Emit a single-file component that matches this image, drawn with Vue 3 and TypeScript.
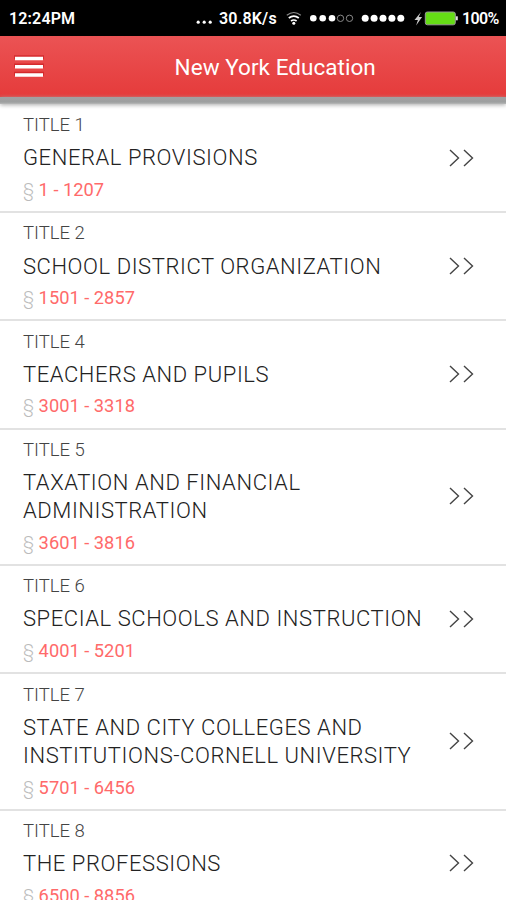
<script setup lang="ts">
interface TitleEntry {
  label: string
  lines: string[]
  range: string
}

const entries: TitleEntry[] = [
  { label: 'TITLE 1', lines: ['GENERAL PROVISIONS'], range: '1 - 1207' },
  { label: 'TITLE 2', lines: ['SCHOOL DISTRICT ORGANIZATION'], range: '1501 - 2857' },
  { label: 'TITLE 4', lines: ['TEACHERS AND PUPILS'], range: '3001 - 3318' },
  { label: 'TITLE 5', lines: ['TAXATION AND FINANCIAL', 'ADMINISTRATION'], range: '3601 - 3816' },
  { label: 'TITLE 6', lines: ['SPECIAL SCHOOLS AND INSTRUCTION'], range: '4001 - 5201' },
  { label: 'TITLE 7', lines: ['STATE AND CITY COLLEGES AND', 'INSTITUTIONS-CORNELL UNIVERSITY'], range: '5701 - 6456' },
  { label: 'TITLE 8', lines: ['THE PROFESSIONS'], range: '6500 - 8856' },
]
</script>

<template>
  <div class="screen">
    <div class="status">
      <span class="clock">12:24PM</span>
      <svg class="more" width="17" height="36" viewBox="0 0 17 36" fill="#fff">
        <circle cx="2.2" cy="22.2" r="1.6" /><circle cx="8.2" cy="22.2" r="1.6" /><circle cx="14.2" cy="22.2" r="1.6" />
      </svg>
      <span class="speed">30.8K/s</span>
      <svg class="signals" width="120" height="36" viewBox="286 0 120 36">
        <g fill="none" stroke="#fff">
          <path d="M286.8 15.3q7-5.6 14 0" stroke-width="1.2" opacity=".55" />
          <path d="M288.8 18q5-3.7 10 0" stroke-width="1.9" />
          <path d="M291 21q2.8-2 5.6 0" stroke-width="1.7" />
        </g>
        <circle cx="293.8" cy="23.3" r="1.5" fill="#fff" />
        <g fill="#fff">
          <circle cx="313.3" cy="18.3" r="3.3" /><circle cx="322.7" cy="18.3" r="3.3" /><circle cx="332" cy="18.3" r="3.3" />
          <circle cx="365.2" cy="18.3" r="3.5" /><circle cx="374.1" cy="18.3" r="3.5" /><circle cx="383" cy="18.3" r="3.5" /><circle cx="391.9" cy="18.3" r="3.5" /><circle cx="400.8" cy="18.3" r="3.5" />
        </g>
        <g fill="none" stroke="#888" stroke-width="1">
          <circle cx="340.5" cy="18.3" r="3.2" /><circle cx="349.5" cy="18.3" r="3.2" />
        </g>
      </svg>
      <svg class="battery" width="46" height="36" viewBox="412 0 46 36">
        <path d="M421 12l-6.5 8h3.4l-1.8 5.5 6-8.5h-3.4z" fill="#ccc" />
        <rect x="425.3" y="12" width="30" height="12.8" rx="2" fill="#65dc16" stroke="#999" stroke-width="1" />
        <rect x="455.8" y="16.3" width="2" height="4" fill="#ddd" />
      </svg>
      <span class="percent">100%</span>
    </div>
    <header class="bar">
      <svg class="menu" width="30" height="26" viewBox="0 0 30 26">
        <path d="M0 3.2h30M0 11.4h30M0 19.7h30" stroke="#c40d12" stroke-width="4" opacity=".5" />
        <path d="M1 4.5h28M1 12.7h28M1 21h28" stroke="#fff" stroke-width="3.4" />
      </svg>
      <h1 class="heading">New York Education</h1>
    </header>
    <div class="shade"></div>
    <ul class="list">
      <li v-for="entry in entries" :key="entry.label" class="row">
        <div class="copy">
          <div class="label">{{ entry.label }}</div>
          <div v-for="line in entry.lines" :key="line" class="name">{{ line }}</div>
          <div class="range"><span class="mark">§</span> {{ entry.range }}</div>
        </div>
        <svg class="more-icon" width="26" height="18" viewBox="0 0 26 18" fill="none" stroke="#444" stroke-width="1.4">
          <path d="M1 1l8.5 8L1 17M15 1l8.5 8L15 17" />
        </svg>
      </li>
    </ul>
  </div>
</template>

<style>
body {
  background: #fff;
}
</style>

<style scoped>
.screen {
  width: 506px;
  height: 900px;
  overflow: hidden;
  background: #fff;
  font-family: Roboto, "Liberation Sans", sans-serif;
}
.status {
  display: flex;
  height: 36px;
  line-height: 38px;
  background: #000;
  color: #fff;
  font-size: 16px;
  font-weight: 600;
  white-space: nowrap;
}
.status svg {
  flex: none;
}
.clock {
  width: 186px;
  padding-left: 9px;
  letter-spacing: 0.15px;
}
.more {
  margin-left: 1px;
}
.speed {
  width: 67px;
  margin-left: 6px;
  letter-spacing: 0.2px;
}
.battery {
  margin-left: 6px;
}
.percent {
  margin-left: 4px;
  letter-spacing: -0.6px;
}
.bar {
  display: flex;
  align-items: center;
  height: 61px;
  background: linear-gradient(#eb5354, #e53b3b);
  color: #fff;
}
.menu {
  flex: none;
  margin-left: 14px;
}
.heading {
  margin: 1px 0 0 130.6px;
  font-size: 22.5px;
  font-weight: 400;
  line-height: 30px;
  letter-spacing: 0.04px;
  white-space: nowrap;
}
.shade {
  height: 7px;
  background: linear-gradient(#a2a0a2 0, #9d9f9f 5px, #b8b8b8 7px);
  box-shadow: 0 1px 4px #aaa;
}
.list {
  margin: 0;
  padding: 0;
  list-style: none;
}
.row {
  display: flex;
  align-items: center;
  justify-content: space-between;
  box-sizing: border-box;
  padding: 8.4px 31px 9.05px 23px;
  border-bottom: 2px solid #e2e2e2;
}
.row:first-child {
  padding-top: 9.25px;
}
.copy {
  white-space: nowrap;
}
.label {
  color: #444;
  font-size: 18.5px;
  font-weight: 300;
  line-height: 24px;
}
.name {
  color: #222;
  font-size: 22px;
  font-weight: 300;
  line-height: 28.25px;
  letter-spacing: 0.57px;
}
.label + .name {
  margin-top: 7.1px;
}
.range {
  margin-top: 5.45px;
  color: #ff6a6a;
  font-size: 18.3px;
  font-weight: 400;
  line-height: 24px;
}
.mark {
  color: #bbb;
  font-weight: 300;
}
.more-icon {
  flex: none;
}
</style>
